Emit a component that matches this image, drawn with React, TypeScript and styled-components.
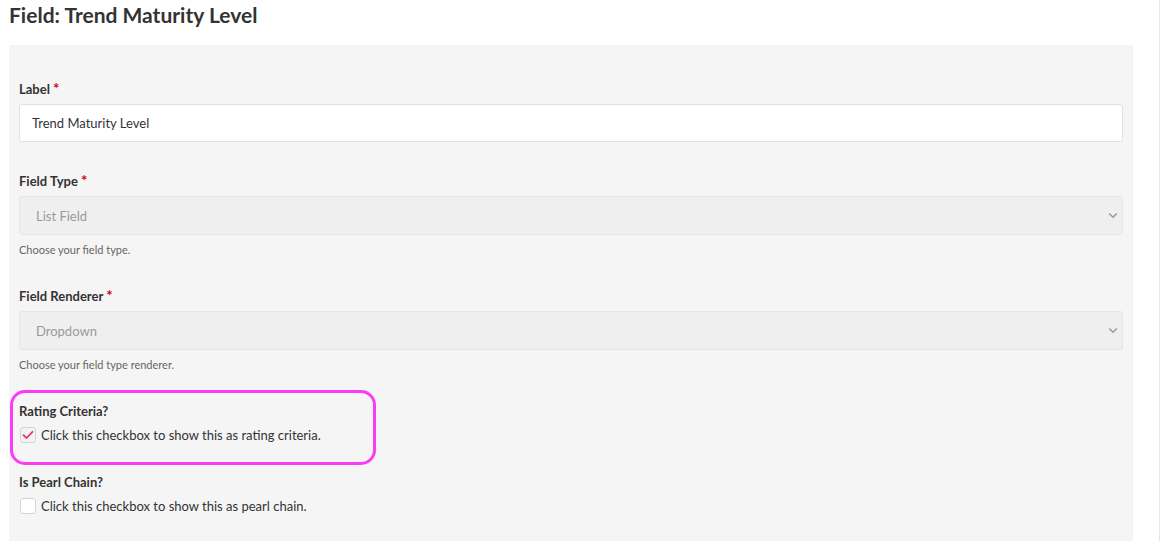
import styled, { createGlobalStyle } from 'styled-components'

const GlobalStyle = createGlobalStyle`
  html, body {
    margin: 0;
    padding: 0;
    background: #fff;
  }
  body {
    font-family: Lato, "Noto Sans", sans-serif;
    color: #333;
  }
`

export default function App() {
  return (
    <>
      <GlobalStyle />
      <Page>
        <Title>Field: Trend Maturity Level</Title>
        <Panel>
          <Group>
            <Label>
              Label <Required>*</Required>
            </Label>
            <TextInput defaultValue="Trend Maturity Level" />
          </Group>

          <Group>
            <Label>
              Field Type <Required>*</Required>
            </Label>
            <SelectBox>
              <span>List Field</span>
              <Chevron />
            </SelectBox>
            <Help>Choose your field type.</Help>
          </Group>

          <Group>
            <Label>
              Field Renderer <Required>*</Required>
            </Label>
            <SelectBox>
              <span>Dropdown</span>
              <Chevron />
            </SelectBox>
            <Help>Choose your field type renderer.</Help>
          </Group>

          <Group $tight>
            <Highlight />
            <Label>Rating Criteria?</Label>
            <CheckRow>
              <CheckBox $checked>
                <svg width="12" height="10" viewBox="0 0 12 10">
                  <path d="M1.5 5.2 L4.6 8 L10.5 1.8" fill="none" stroke="#e8365f" strokeWidth="1.8" strokeLinecap="round" strokeLinejoin="round" />
                </svg>
              </CheckBox>
              Click this checkbox to show this as rating criteria.
            </CheckRow>
          </Group>

          <Group>
            <Label>Is Pearl Chain?</Label>
            <CheckRow>
              <CheckBox />
              Click this checkbox to show this as pearl chain.
            </CheckRow>
          </Group>
        </Panel>
      </Page>
    </>
  )
}

function Chevron() {
  return (
    <svg width="10" height="7" viewBox="0 0 10 7">
      <path d="M1.2 1.5 L5 5.2 L8.8 1.5" fill="none" stroke="#9a9a9a" strokeWidth="1.6" />
    </svg>
  )
}

const Page = styled.div`
  width: 1160px;
  min-height: 541px;
  border-right: 1px solid #e6e6e6;
  padding-left: 9px;
  box-sizing: border-box;
`

const Title = styled.h1`
  margin: 0;
  padding-top: 3px;
  font-size: 21px;
  line-height: 24px;
  font-weight: 700;
  color: #333;
`

const Panel = styled.div`
  margin-top: 18px;
  width: 1124px;
  min-height: 496px;
  box-sizing: border-box;
  background: #f5f5f5;
  padding: 35px 10px 0;
`

const Group = styled.div<{ $tight?: boolean }>`
  position: relative;
  margin-bottom: ${(p) => (p.$tight ? '29px' : '30px')};
`

const Label = styled.div`
  font-size: 13px;
  line-height: 18px;
  height: 18px;
  font-weight: 700;
  color: #333;
  margin-bottom: 6px;
`

const Required = styled.span`
  color: #d0021b;
  font-size: 15px;
  line-height: 0;
`

const TextInput = styled.input`
  display: block;
  width: 100%;
  height: 38px;
  box-sizing: border-box;
  border: 1px solid #dde2e8;
  border-radius: 3px;
  background: #fff;
  padding: 0 12px;
  font-family: inherit;
  font-size: 13px;
  color: #333;
  outline: none;
`

const SelectBox = styled.div`
  display: flex;
  align-items: center;
  justify-content: space-between;
  height: 39px;
  box-sizing: border-box;
  border: 1px solid #e2e5ea;
  border-radius: 3px;
  background: #efefef;
  padding: 0 4px 0 16px;
  font-size: 13px;
  color: #9a9a9a;
`

const Help = styled.div`
  margin-top: 7px;
  font-size: 11px;
  line-height: 15px;
  color: #666;
`

const CheckRow = styled.label`
  display: flex;
  align-items: center;
  gap: 5px;
  font-size: 13px;
  line-height: 18px;
  color: #333;
  margin-top: 6px;
`

const CheckBox = styled.span<{ $checked?: boolean }>`
  display: inline-flex;
  align-items: center;
  justify-content: center;
  width: 16px;
  height: 16px;
  box-sizing: border-box;
  border: 1px solid #cfd5dd;
  border-radius: 3px;
  background: ${(p) => (p.$checked ? '#f2f2f4' : '#fff')};
  margin-left: 1px;
`

const Highlight = styled.div`
  position: absolute;
  left: -9px;
  top: -12px;
  width: 366px;
  height: 75px;
  box-sizing: border-box;
  border: 3.5px solid #fb3cf6;
  border-radius: 15px;
  pointer-events: none;
`
